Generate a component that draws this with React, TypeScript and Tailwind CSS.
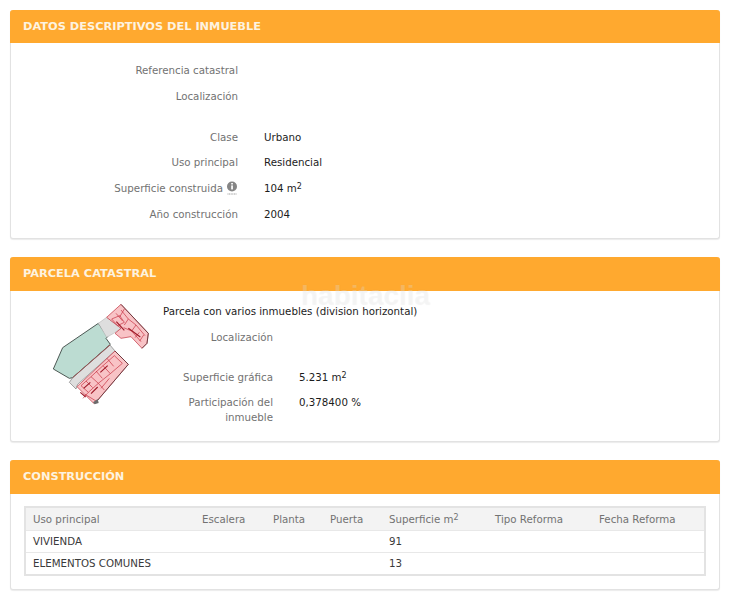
import React from 'react'

const font = { fontFamily: '"DejaVu Sans", Verdana, sans-serif' }

const Card = ({
  title,
  className,
  headerClass = 'h-[34px]',
  children,
}: {
  title: string
  className: string
  headerClass?: string
  children: React.ReactNode
}) => (
  <section className={`rounded-[3px] border border-t-0 border-[#e2e2e2] bg-white shadow-[0_1px_1px_rgba(0,0,0,0.08)] ${className}`}>
    <h2 className={`-mx-px flex items-center rounded-t-[3px] bg-[#ffa92f] pl-[13px] text-[11.35px] font-bold text-[#fdf3e0] ${headerClass}`}>
      {title}
    </h2>
    {children}
  </section>
)

const Row = ({
  label,
  labelWidth,
  className = '',
  children,
}: {
  label: React.ReactNode
  labelWidth: string
  className?: string
  children?: React.ReactNode
}) => (
  <div className={`flex text-[10.25px] leading-[15px] ${className}`}>
    <div className={`text-right text-[#727272] ${labelWidth}`}>{label}</div>
    <div className="ml-[26px] text-[#1c1c1c]">{children}</div>
  </div>
)

const M2 = () => (
  <>
    m<sup className="relative -top-[3px] align-baseline text-[8px] leading-none">2</sup>
  </>
)

const InfoIcon = () => (
  <svg width="12" height="14" viewBox="0 0 12 14" className="ml-[3px] inline-block align-[-3px]">
    <circle cx="6" cy="5.5" r="5" fill="#858585" />
    <rect x="5.2" y="2" width="1.7" height="1.5" fill="#fff" />
    <rect x="5.2" y="4.4" width="1.7" height="4" fill="#fff" />
    <path d="M1.5 13h9" stroke="#9a9a9a" strokeWidth="1" strokeDasharray="1 0.6" />
  </svg>
)

const ParcelMap = () => (
  <svg width="120" height="120" viewBox="0 0 360 360">
    <path d="M37 222L65 158L172 85L200 125L195 130L208 148L95 248L85 250Z" fill="#bcdcd2" stroke="#2f3a36" strokeWidth="2.5" />
    <path d="M172 85L197 67L240 100L218 115L197 127Z" fill="#dedede" stroke="#a8a8a8" strokeWidth="1.5" />
    <path d="M85 262L95 248L207 150L222 168L110 268L105 282Z" fill="#dedede" stroke="#555" strokeWidth="1.5" />
    <path d="M95 248L207 150" stroke="#9c5656" strokeWidth="3" />
    <path d="M197 67L240 28L322 115L318 145L303 160L270 125L240 130L222 115L240 100Z" fill="#f8c3c6" stroke="#c02a3a" strokeWidth="2" />
    <path d="M108 275L222 168L262 208L168 318L158 325Z" fill="#f8c3c6" stroke="#c02a3a" strokeWidth="2" />
    <path d="M240 28L322 115L318 145L303 160M222 168L262 208L168 318" fill="none" stroke="#3b2226" strokeWidth="2" />
    <path
      d="M212 72L236 62L250 82L230 92ZM240 45L262 72M262 72L285 90L272 108L248 98M285 90L312 122M272 108L300 140M250 42L236 66M225 55L245 78M295 112L282 128M308 120L296 138M262 72L250 90M120 272L150 245L172 265L142 292ZM150 245L186 212L208 236L172 265M186 212L220 182L244 205L208 236M132 298L165 318M172 265L190 285M142 292L126 310M198 190L218 214M165 228L184 250M135 258L155 278M205 250L180 280"
      fill="none"
      stroke="#c42c3c"
      strokeWidth="2"
    />
    <path d="M128 280L148 262M178 232L200 212M262 100L298 126M226 80L250 106M150 296L170 276M118 292L134 306" stroke="#a01c2a" strokeWidth="3.5" />
    <path d="M156 322L170 312L173 324L161 328Z" fill="#6b6b6b" />
  </svg>
)

const columns = 'grid grid-cols-[169px_71px_57px_59px_106px_104px_1fr]'
const headers = ['Uso principal', 'Escalera', 'Planta', 'Puerta', 'Superficie', 'Tipo Reforma', 'Fecha Reforma']

export default function App() {
  return (
    <div style={font} className="relative h-[600px] w-[730px] overflow-hidden bg-white px-[10px] pt-[10px]">
      <Card title="DATOS DESCRIPTIVOS DEL INMUEBLE" className="h-[229px]" headerClass="h-[33px]">
        <div className="pt-[20px]">
          <Row label="Referencia catastral" labelWidth="w-[227px]" className="h-[26px]" />
          <Row label="Localización" labelWidth="w-[227px]" className="h-[41px]" />
          <Row label="Clase" labelWidth="w-[227px]" className="h-[25px]">Urbano</Row>
          <Row label="Uso principal" labelWidth="w-[227px]" className="h-[26px]">Residencial</Row>
          <Row
            label={
              <>
                Superficie construida
                <InfoIcon />
              </>
            }
            labelWidth="w-[227px]"
            className="h-[26px]"
          >
            104 <M2 />
          </Row>
          <Row label="Año construcción" labelWidth="w-[227px]">2004</Row>
        </div>
      </Card>

      <Card title="PARCELA CATASTRAL" className="mt-[18px] h-[185px]">
        <div className="flex">
          <div className="ml-[30px] mt-[4px] w-[122px] shrink-0">
            <ParcelMap />
          </div>
          <div className="pt-[13px]">
            <p className="h-[26px] text-[10.25px] leading-[15px] text-[#1c1c1c]">
              Parcela con varios inmuebles (division horizontal)
            </p>
            <Row label="Localización" labelWidth="w-[110px]" className="h-[40px]" />
            <Row label="Superficie gráfica" labelWidth="w-[110px]" className="h-[25px]">
              5.231 <M2 />
            </Row>
            <Row label="Participación del inmueble" labelWidth="w-[110px]">0,378400 %</Row>
          </div>
        </div>
      </Card>

      <Card title="CONSTRUCCIÓN" className="mt-[18px] h-[130px]">
        <div className="mx-[13px] mt-[12px] border-2 border-[#e3e3e3] text-[10.25px] leading-[15px]">
          <div className={`${columns} h-[22px] items-center bg-[#f3f3f3] text-[#727272]`}>
            {headers.map((h) => (
              <div key={h} className="pl-[7px]">
                {h === 'Superficie' ? (
                  <>
                    Superficie <M2 />
                  </>
                ) : (
                  h
                )}
              </div>
            ))}
          </div>
          <div className={`${columns} h-[22px] items-center border-t border-[#e8e8e8] text-[#3a3a3a]`}>
            <div className="pl-[7px]">VIVIENDA</div>
            <div />
            <div />
            <div />
            <div className="pl-[7px]">91</div>
          </div>
          <div className={`${columns} h-[22px] items-center border-t border-[#e8e8e8] text-[#3a3a3a]`}>
            <div className="pl-[7px]">ELEMENTOS COMUNES</div>
            <div />
            <div />
            <div />
            <div className="pl-[7px]">13</div>
          </div>
        </div>
      </Card>

      <div className="absolute left-[301px] top-[279px] font-['Liberation_Sans',sans-serif] text-[28px] font-bold leading-[34px] text-white/25 [text-shadow:0_0_1px_rgba(0,0,0,0.06)]">
        habitaclia
      </div>
    </div>
  )
}
